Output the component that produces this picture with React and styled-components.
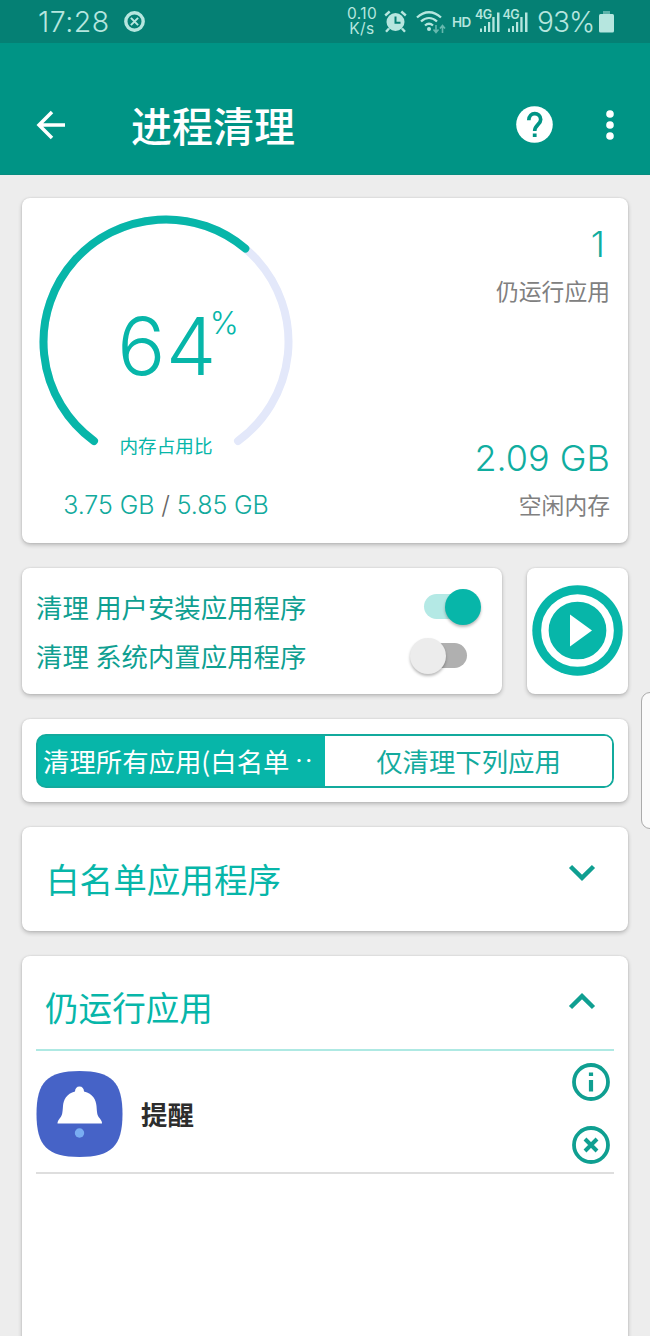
import React from "react";
import styled, { createGlobalStyle } from "styled-components";

const latin = `Inter, "Noto Sans CJK SC", sans-serif`;
const teal = "#07b6a9";
const deep = "#0f9f91";

const GlobalStyle = createGlobalStyle`
  * { box-sizing: border-box; }
  body { margin: 0; background: #ededed; }
  svg { display: block; flex: none; }
`;

const Screen = styled.div`
  position: relative;
  width: 650px;
  height: 1336px;
  overflow: hidden;
  display: flex;
  flex-direction: column;
  background: #ededed;
  font-family: "Noto Sans CJK SC", sans-serif;
  font-weight: 400;
`;

const StatusBar = styled.div`
  height: 43px;
  flex: none;
  display: flex;
  align-items: center;
  padding: 0 36px 0 38px;
  background: #058074;
  color: #b6e6df;
  font-family: ${latin};
  font-weight: 300;
`;

const Clock = styled.span`
  width: 86px;
  font-size: 28.5px;
  line-height: 43px;
  letter-spacing: 0.5px;
`;

const Spacer = styled.div`
  flex: 1;
`;

const Speed = styled.div`
  width: 34px;
  margin-right: 5px;
  display: flex;
  flex-direction: column;
  align-items: center;
  font-size: 15.5px;
  line-height: 14.5px;
  letter-spacing: 0.4px;
  font-weight: 400;
`;

const HdMark = styled.span`
  width: 20px;
  margin: 0 3px 0 6px;
  font-size: 13.5px;
  font-weight: 600;
  letter-spacing: -0.5px;
`;

const Signal = styled.div`
  display: grid;
  width: 25.5px;
  height: 24px;
  margin-right: 2px;
  > * { grid-area: 1 / 1; }
  svg { margin-left: 1px; }
`;

const Network = styled.span`
  font-size: 12.5px;
  line-height: 10px;
  font-weight: 600;
  letter-spacing: -0.5px;
`;

const Battery = styled.span`
  width: 58px;
  margin: 0 4px 0 7px;
  font-size: 28px;
  letter-spacing: -0.9px;
  white-space: nowrap;
`;

const AppBar = styled.header`
  height: 132px;
  flex: none;
  display: flex;
  align-items: center;
  padding: 32px 36px 0 36px;
  background: #009485;
  border-bottom: 1px solid #078c80;
  color: #fff;
`;

const Title = styled.h1`
  flex: 1;
  margin: -2px 0 0 65px;
  font-size: 41px;
  line-height: 60px;
  font-weight: 500;
`;

const Content = styled.main`
  flex: none;
  display: flex;
  flex-direction: column;
  gap: 25px;
  padding: 22.5px 22px 0;
`;

const Card = styled.section`
  height: ${(p) => p.$height}px;
  width: ${(p) => (p.$width ? `${p.$width}px` : "auto")};
  padding: ${(p) => p.$padding || "0"};
  background: #fff;
  border-radius: 8px;
  box-shadow: 0 2px 4px rgba(0, 0, 0, 0.22), 0 0 2px rgba(0, 0, 0, 0.12);
`;

const MemoryCard = styled(Card)`
  display: flex;
  justify-content: space-between;
`;

const GaugeColumn = styled.div`
  width: 288px;
  display: flex;
  flex-direction: column;
  align-items: center;
  padding-top: 17px;
  color: ${teal};
`;

const Gauge = styled.div`
  display: grid;
  width: 254px;
  height: 240px;
  > * { grid-area: 1 / 1; }
`;

const GaugeText = styled.div`
  display: flex;
  flex-direction: column;
  align-items: center;
  padding-top: 91px;
`;

const Percentage = styled.div`
  display: flex;
  align-items: flex-start;
  height: 80px;
  margin-left: 24px;
  font-family: ${latin};
  font-weight: 300;
`;

const PercentNumber = styled.span`
  font-size: 80px;
  line-height: 80px;
  letter-spacing: 0.5px;
`;

const PercentSign = styled.span`
  font-size: 31px;
  line-height: 33px;
  margin-left: -7px;
`;

const GaugeLabel = styled.div`
  margin-top: 45px;
  font-size: 18.6px;
  line-height: 28px;
`;

const Usage = styled.div`
  margin-top: 35px;
  font-family: ${latin};
  font-size: 25px;
  font-weight: 300;
  line-height: 30px;
  letter-spacing: -0.1px;
  color: #12aa9d;
  white-space: nowrap;
  i { font-style: normal; color: #666; }
`;

const Stats = styled.div`
  display: flex;
  flex-direction: column;
  justify-content: space-between;
  align-items: flex-end;
  padding: 22px 18px 15px 0;
`;

const Stat = styled.div`
  text-align: right;
`;

const StatValue = styled.div`
  font-family: ${latin};
  font-size: 36px;
  font-weight: 300;
  line-height: 48px;
  color: #10ad9f;
  padding-right: ${(p) => p.$inset || 0}px;
`;

const StatLabel = styled.div`
  font-size: 22.8px;
  line-height: 46px;
  color: #808080;
`;

const Row = styled.div`
  display: flex;
  justify-content: space-between;
`;

const Option = styled.div`
  height: 49px;
  display: flex;
  align-items: center;
  justify-content: space-between;
  color: ${deep};
  font-size: 26.4px;
  word-spacing: 0.5px;
`;

const Switch = styled.div`
  width: 43px;
  height: 25px;
  margin-right: 21px;
  border-radius: 13px;
  background: ${(p) => (p.$on ? "#b4e9e5" : "#b0b0b0")};
  display: flex;
  align-items: center;
  justify-content: ${(p) => (p.$on ? "flex-end" : "flex-start")};
`;

const Knob = styled.div`
  flex: none;
  width: 36px;
  height: 36px;
  margin: 0 -14px;
  border-radius: 50%;
  background: ${(p) => (p.$on ? teal : "#ececec")};
  box-shadow: 0 2px 3px rgba(0, 0, 0, 0.28);
`;

const PlayCard = styled(Card)`
  display: flex;
  align-items: center;
  justify-content: center;
`;

const Segments = styled.div`
  height: 54px;
  display: flex;
  border: 2px solid #13aa9d;
  border-radius: 10px;
  background: linear-gradient(to right, ${teal} 50%, #fff 50%);
  overflow: hidden;
`;

const Segment = styled.div`
  flex: ${(p) => (p.$active ? "0 0 287px" : "1")};
  display: flex;
  align-items: center;
  justify-content: ${(p) => (p.$active ? "flex-start" : "center")};
  padding-left: ${(p) => (p.$active ? 5 : 0)}px;
  background: ${(p) => (p.$active ? teal : "#fff")};
  color: ${(p) => (p.$active ? "#fff" : "#13aa9d")};
  font-size: 26.4px;
  white-space: nowrap;
`;

const Dots = styled.span`
  margin-left: 6px;
  font-family: Inter, sans-serif;
  font-size: 24px;
  letter-spacing: 3px;
`;

const SectionHead = styled.div`
  height: ${(p) => p.$height}px;
  display: flex;
  align-items: center;
  justify-content: space-between;
  padding: ${(p) => p.$drop || 0}px 18px 0 ${(p) => p.$inset}px;
  border-bottom: ${(p) => (p.$ruled ? "2px solid #aee9e3" : "none")};
  color: ${teal};
  font-size: 33.6px;
  svg { margin-bottom: ${(p) => p.$lift}px; }
`;

const AppRow = styled.div`
  height: 122.5px;
  display: flex;
  align-items: center;
  border-bottom: 2px solid #dedede;
  padding: 5px 4px 0 0;
`;

const AppName = styled.div`
  flex: 1;
  margin-left: 18px;
  font-size: 26.4px;
  font-weight: 700;
  color: #2d2d2d;
`;

const Actions = styled.div`
  display: flex;
  flex-direction: column;
  gap: 25px;
`;

const EdgeHandle = styled.div`
  position: absolute;
  left: 641px;
  top: 692px;
  width: 20px;
  height: 137px;
  border: 1px solid #aaa;
  border-radius: 9px;
  background: #fafafa;
`;

const SignalBars = () => (
  <Signal>
    <Network>4G</Network>
    <svg width="24" height="24" viewBox="0 0 24 24" fill="currentColor">
      <path d="M4 18.500h2v3.500H4zM8 16h2v6H8zM12 12h2.200v10H12zM16.300 7h2.300v15h-2.300zM21 2.500h2.500v19.500h-2.500z" />
    </svg>
  </Signal>
);

const Chevron = ({ up }) => (
  <svg width="28" height="18" viewBox="0 0 28 18" fill="none" stroke={deep} strokeWidth="4.5">
    <path d={up ? "M2.500 15.500L14 4.200 25.500 15.500" : "M2.500 2.500L14 13.800 25.500 2.500"} />
  </svg>
);

const CircleIcon = ({ children }) => (
  <svg width="38" height="38" viewBox="0 0 38 38" fill="none" stroke={deep}>
    <circle cx="19" cy="19" r="17" strokeWidth="3.800" />
    {children}
  </svg>
);

const GaugeArc = ({ percent }) => {
  const track = "M55 226A122.500 122.500 0 1 1 199 226";
  return (
    <svg width="254" height="240" viewBox="0 0 254 240" fill="none" strokeWidth="8" strokeLinecap="round">
      <path d={track} stroke="#e3e8fa" />
      <path d={track} stroke={teal} pathLength="100" strokeDasharray={`${percent} 200`} />
    </svg>
  );
};

export default function App() {
  return (
    <Screen>
      <GlobalStyle />
      <StatusBar>
        <Clock>17:28</Clock>
        <svg width="21" height="21" viewBox="0 0 21 21" fill="none" stroke="currentColor">
          <circle cx="10.500" cy="10.500" r="8.700" strokeWidth="3.400" />
          <path d="M6.900 6.900l7.200 7.200M14.100 6.900l-7.200 7.200" strokeWidth="2" />
        </svg>
        <Spacer />
        <Speed><span>0.10</span><span>K/s</span></Speed>
        <svg width="23" height="23" viewBox="0 0 23 23" fill="none" stroke="currentColor">
          <circle cx="11.500" cy="12" r="9" fill="currentColor" stroke="none" />
          <path d="M1.200 5.500l4.500-4M21.800 5.500l-4.500-4" strokeWidth="2.400" />
          <path d="M5 18.500l-3 3.300M18 18.500l3 3.300" strokeWidth="2.400" />
          <path d="M11.500 6.500v6.300h5" stroke="#058074" strokeWidth="2" />
        </svg>
        <svg width="30" height="24" viewBox="0 0 30 24" fill="none" stroke="currentColor" strokeWidth="2.300" style={{ marginLeft: 9 }}>
          <path d="M1 7.500C8.500 0.500 17.500 0.500 25 7.500M5 11.500c5-4.600 11-4.600 16 0M9 15.500c2.700-2.400 5.300-2.400 8 0" />
          <circle cx="13" cy="19" r="2" fill="currentColor" stroke="none" />
          <g opacity=".55" strokeWidth="1.600">
            <path d="M20 15v7M17.500 19.500l2.500 3 2.500-3M26.500 23v-7M24 18.500l2.500-3 2.500 3" />
          </g>
        </svg>
        <HdMark>HD</HdMark>
        <SignalBars />
        <SignalBars />
        <Battery>93%</Battery>
        <svg width="15" height="23" viewBox="0 0 15 23" fill="currentColor">
          <path d="M4 1h7v3H4z" opacity=".5" />
          <path d="M1.500 4h12q1.500 0 1.500 1.500V21q0 1.500-1.500 1.500h-12Q0 22.500 0 21V5.500Q0 4 1.500 4z" />
        </svg>
      </StatusBar>

      <AppBar>
        <svg width="30" height="30" viewBox="0 0 30 30" fill="none" stroke="#fff" strokeWidth="3.500">
          <path d="M29 15H3M16 2L3 15l13 13" />
        </svg>
        <Title>进程清理</Title>
        <svg width="37" height="37" viewBox="0 0 37 37">
          <circle cx="18.500" cy="18.500" r="18.300" fill="#fff" />
          <path d="M12.800 14.200c0-9 11.900-8.500 11.900-.7 0 5-6 5.500-6 11.500" fill="none" stroke="#009485" strokeWidth="3.700" />
          <path d="M16.800 27.500h3.800V31h-3.800z" fill="#009485" />
        </svg>
        <svg width="8" height="30" viewBox="0 0 8 30" fill="#fff" style={{ marginLeft: 53 }}>
          <circle cx="4" cy="4" r="3.800" /><circle cx="4" cy="15" r="3.800" /><circle cx="4" cy="26" r="3.800" />
        </svg>
      </AppBar>

      <Content>
        <MemoryCard $height={345}>
          <GaugeColumn>
            <Gauge>
              <GaugeArc percent={64} />
              <GaugeText>
                <Percentage>
                  <PercentNumber>64</PercentNumber>
                  <PercentSign>%</PercentSign>
                </Percentage>
                <GaugeLabel>内存占用比</GaugeLabel>
              </GaugeText>
            </Gauge>
            <Usage>3.75 GB <i>/</i> 5.85 GB</Usage>
          </GaugeColumn>
          <Stats>
            <Stat>
              <StatValue $inset={5}>1</StatValue>
              <StatLabel>仍运行应用</StatLabel>
            </Stat>
            <Stat>
              <StatValue>2.09 GB</StatValue>
              <StatLabel>空闲内存</StatLabel>
            </Stat>
          </Stats>
        </MemoryCard>

        <Row>
          <Card $height={126.5} $width={480} $padding="14.500px 14px">
            <Option>
              清理 用户安装应用程序
              <Switch $on><Knob $on /></Switch>
            </Option>
            <Option>
              清理 系统内置应用程序
              <Switch><Knob /></Switch>
            </Option>
          </Card>
          <PlayCard $height={126.5} $width={101.5}>
            <svg width="91" height="91" viewBox="0 0 91 91" fill={teal}>
              <circle cx="45.500" cy="45.500" r="45.200" />
              <circle cx="45.500" cy="45.500" r="32.600" stroke="#fff" strokeWidth="7.500" />
              <path d="M38 29.500L60 45.500 38 61.500z" fill="#fff" />
            </svg>
          </PlayCard>
        </Row>

        <Card $height={83} $padding="14.500px 14px">
          <Segments>
            <Segment $active>清理所有应用(白名单<Dots>··</Dots></Segment>
            <Segment>仅清理下列应用</Segment>
          </Segments>
        </Card>

        <Card $height={103.5} $padding="0 14px">
          <SectionHead $height={103} $inset={10} $lift={12}>
            白名单应用程序
            <Chevron />
          </SectionHead>
        </Card>

        <Card $height={420} $padding="0 14px">
          <SectionHead $height={95.5} $inset={9} $lift={11} $drop={8} $ruled>
            仍运行应用
            <Chevron up />
          </SectionHead>
          <AppRow>
            <svg width="87" height="86" viewBox="-0.5 0 87 86">
              <path d="M43 0C75 0 86 11 86 43S75 86 43 86 0 75 0 43 11 0 43 0z" fill="#4663c7" />
              <path d="M43 15.500c-2.800 0-4.500 2-4.500 5C30 22.500 27 29 26.500 35c-.6 7-.5 9-3 12-2 2.500-2.500 3.500-2.500 5.500h44.500c0-2-.5-3-2.500-5.500-2.500-3-2.400-5-3-12-.5-6-3.500-12.500-12.500-14.500 0-3-1.700-5-4.500-5z" fill="#fff" />
              <circle cx="43" cy="62" r="4.700" fill="#79adf2" />
            </svg>
            <AppName>提醒</AppName>
            <Actions>
              <CircleIcon>
                <path d="M19 9.500v3.500M19 17v11.500" strokeWidth="4.200" />
              </CircleIcon>
              <CircleIcon>
                <path d="M13 13l12 12M25 13L13 25" strokeWidth="4" />
              </CircleIcon>
            </Actions>
          </AppRow>
        </Card>
      </Content>
      <EdgeHandle />
    </Screen>
  );
}
